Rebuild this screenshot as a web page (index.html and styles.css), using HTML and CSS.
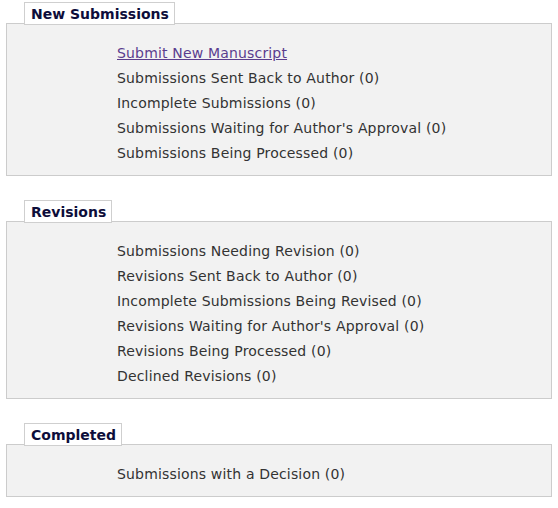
FILE: index.html
```html
<!DOCTYPE html>
<html>
<head>
<meta charset="utf-8">
<link rel="stylesheet" href="styles.css">
</head>
<body>
<div class="page">
  <section class="group">
    <div class="legend">New Submissions</div>
    <div class="box">
      <a class="item link" href="#">Submit New Manuscript</a>
      <div class="item">Submissions Sent Back to Author (0)</div>
      <div class="item">Incomplete Submissions (0)</div>
      <div class="item">Submissions Waiting for Author's Approval (0)</div>
      <div class="item">Submissions Being Processed (0)</div>
    </div>
  </section>
  <section class="group">
    <div class="legend">Revisions</div>
    <div class="box">
      <div class="item">Submissions Needing Revision (0)</div>
      <div class="item">Revisions Sent Back to Author (0)</div>
      <div class="item">Incomplete Submissions Being Revised (0)</div>
      <div class="item">Revisions Waiting for Author's Approval (0)</div>
      <div class="item">Revisions Being Processed (0)</div>
      <div class="item">Declined Revisions (0)</div>
    </div>
  </section>
  <section class="group">
    <div class="legend">Completed</div>
    <div class="box">
      <div class="item">Submissions with a Decision (0)</div>
    </div>
  </section>
</div>
</body>
</html>
```
FILE: styles.css
```css
html, body {
  margin: 0;
  padding: 0;
  background: #ffffff;
}
.page {
  padding: 2px 6px 0 6px;
  display: flex;
  flex-direction: column;
  gap: 24px;
  font-family: "DejaVu Sans", Verdana, sans-serif;
}
.group {
  display: flex;
  flex-direction: column;
  align-items: flex-start;
}
.legend {
  position: relative;
  z-index: 1;
  margin-left: 18px;
  margin-bottom: -2px;
  height: 21px;
  line-height: 23px;
  padding: 0 5px 0 6px;
  border: 1px solid #cfcfcf;
  background: #ffffff;
  color: #0d0d3a;
  font-weight: bold;
  font-size: 14px;
}
.box {
  align-self: stretch;
  background: #f2f2f2;
  border: 1px solid #cccccc;
  padding: 17px 10px 9px 110px;
  display: flex;
  flex-direction: column;
}
.item {
  font-size: 14px;
  line-height: 25px;
  letter-spacing: 0.17px;
  color: #333333;
}
.link {
  color: #5b3d8e;
  text-decoration: underline;
  align-self: flex-start;
}
```
